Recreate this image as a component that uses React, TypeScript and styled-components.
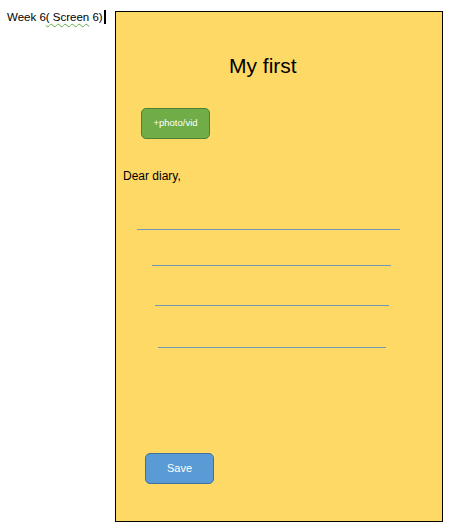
import React from "react";
import styled, { createGlobalStyle } from "styled-components";

const GlobalStyle = createGlobalStyle`
  html, body {
    margin: 0;
    padding: 0;
    background: #ffffff;
  }
  body {
    font-family: "Liberation Sans", Arial, sans-serif;
  }
`;

const Page = styled.div`
  display: flex;
  align-items: flex-start;
  width: 451px;
  height: 531px;
  padding-left: 7px;
  box-sizing: border-box;
`;

const Heading = styled.div`
  display: flex;
  align-items: center;
  width: 108px;
  height: 16px;
  margin-top: 9px;
  font-size: 11.5px;
  color: #000;
  white-space: nowrap;
`;

const Squiggle = styled.span`
  text-decoration: underline wavy #5fae4a;
  text-decoration-thickness: 1px;
  text-underline-offset: 2px;
`;

const Caret = styled.span`
  display: inline-block;
  width: 2px;
  height: 14px;
  margin-left: 1px;
  background: #000;
`;

const Panel = styled.div`
  display: flex;
  flex-direction: column;
  align-items: flex-start;
  width: 328px;
  height: 511px;
  margin-top: 11px;
  box-sizing: border-box;
  border: 1px solid #000;
  background: #ffd966;
`;

const Title = styled.h1`
  margin: 42px 0 0 113px;
  font-size: 21px;
  line-height: 24px;
  font-weight: normal;
  color: #000;
`;

const ShapeButton = styled.button<{ $fill: string; $edge: string; $size: number }>`
  display: flex;
  align-items: center;
  justify-content: center;
  width: 69px;
  height: 31px;
  padding: 0 0 2px;
  box-sizing: border-box;
  border: 1px solid ${(p) => p.$edge};
  border-radius: 5px;
  background: ${(p) => p.$fill};
  color: #fff;
  font-family: "Liberation Sans", Arial, sans-serif;
  font-size: ${(p) => p.$size}px;
`;

const PhotoSlot = styled.div`
  margin: 30px 0 0 25px;
`;

const SaveSlot = styled.div`
  margin: 105px 0 0 29px;
`;

const Greeting = styled.p`
  margin: 29px 0 0 7px;
  font-size: 12px;
  line-height: 16px;
  color: #000;
`;

const Rule = styled.div<{ $gap: number; $left: number; $width: number }>`
  margin: ${(p) => p.$gap}px 0 0 ${(p) => p.$left}px;
  width: ${(p) => p.$width}px;
  height: 1px;
  background: #6f98b8;
`;

const rules = [
  { gap: 45, left: 21, width: 263 },
  { gap: 35, left: 36, width: 239 },
  { gap: 39, left: 39, width: 234 },
  { gap: 41, left: 42, width: 228 },
];

export default function App() {
  return (
    <>
      <GlobalStyle />
      <Page>
        <Heading>
          Week 6<Squiggle>( Screen</Squiggle>&nbsp;6)
          <Caret />
        </Heading>
        <Panel>
          <Title>My first</Title>
          <PhotoSlot>
            <ShapeButton $fill="#70ad47" $edge="#507e32" $size={9.5}>
              +photo/vid
            </ShapeButton>
          </PhotoSlot>
          <Greeting>Dear diary,</Greeting>
          {rules.map((r, i) => (
            <Rule key={i} $gap={r.gap} $left={r.left} $width={r.width} />
          ))}
          <SaveSlot>
            <ShapeButton $fill="#5b9bd5" $edge="#41719c" $size={11}>
              Save
            </ShapeButton>
          </SaveSlot>
        </Panel>
      </Page>
    </>
  );
}
